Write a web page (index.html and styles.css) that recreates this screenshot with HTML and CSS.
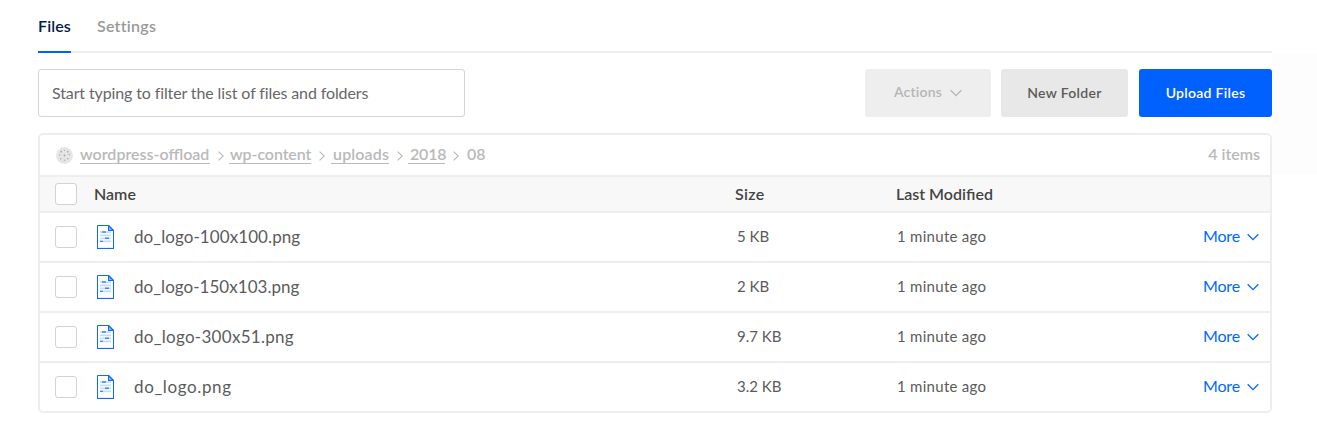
FILE: index.html
```
<!DOCTYPE html>
<html lang="en">
<head>
<meta charset="utf-8">
<title>Files</title>
<link rel="stylesheet" href="styles.css">
</head>
<body>
<svg class="defs" width="0" height="0" aria-hidden="true">
  <symbol id="down" viewBox="0 0 12 8"><path d="M.7 1.2 6 6.6l5.3-5.4" fill="none" stroke="currentColor" stroke-width="1.3"/></symbol>
  <symbol id="right" viewBox="0 0 6 10"><path d="M.6.6 5.2 5 .6 9.4" fill="none" stroke="currentColor" stroke-width="1.1"/></symbol>
  <symbol id="file" viewBox="0 0 17 24">
    <path d="M.5.5H11.5L16.5 5.5V23.5H.5Z" fill="#fff"/>
    <path d="M11.5.5H.5V23.4H16.5V5.5" fill="none" stroke="#0f69ff"/>
    <path d="M0 23h17v1H0z" fill="#0f69ff"/>
    <path d="M11 0h1l5 5v1h-6z" fill="#0f69ff"/>
    <path d="M12 2l3 3h-3z" fill="#8fbcff"/>
    <path d="M3 7.2h11M3 10.3h11M3 13.4h11M3 16.4h11" stroke="#c5dcff" stroke-width="1.7"/>
    <path d="M5 7h4M8 13.3h4M3 16.4h3" stroke="#3d86ff" stroke-width="1.4"/>
  </symbol>
</svg>
<main class="page">
  <nav class="tabs"><a class="tab active"><span>Files</span></a><a class="tab settings"><span>Settings</span></a></nav>
  <div class="toolbar">
    <input class="filter" type="text" placeholder="Start typing to filter the list of files and folders">
    <button class="btn actions"><span>Actions</span><svg class="down"><use href="#down"/></svg></button>
    <button class="btn folder"><span>New Folder</span></button>
    <button class="btn upload"><span>Upload Files</span></button>
  </div>
  <section class="panel">
    <div class="crumbs">
      <svg class="space" viewBox="0 0 18 18"><circle cx="9" cy="9" r="8.9" fill="#e5e5e5"/><g fill="#aaa"><circle cx="9" cy="9" r="1"/><circle cx="5.5" cy="5" r=".9"/><circle cx="9" cy="3.5" r=".7"/><circle cx="12.5" cy="5" r=".9"/><circle cx="14" cy="8" r=".8"/><circle cx="4" cy="8.5" r=".7"/><circle cx="5" cy="12.5" r=".8"/><circle cx="9" cy="14" r=".8"/><circle cx="12.5" cy="12.5" r=".8"/></g></svg>
      <a class="crumb c-bucket"><span>wordpress-offload</span></a><svg class="right r1"><use href="#right"/></svg>
      <a class="crumb c-content"><span>wp-content</span></a><svg class="right r2"><use href="#right"/></svg>
      <a class="crumb c-uploads"><span>uploads</span></a><svg class="right r3"><use href="#right"/></svg>
      <a class="crumb c-year"><span>2018</span></a><svg class="right r4"><use href="#right"/></svg>
      <span class="current">08</span>
      <span class="count">4 items</span>
    </div>
    <div class="row head"><i class="box"></i><b class="name">Name</b><b class="size">Size</b><b class="date">Last Modified</b></div>
    <div class="row"><i class="box"></i><svg class="file"><use href="#file"/></svg><span class="name n1">do_logo-100x100.png</span><span class="size">5 KB</span><span class="date">1 minute ago</span><a class="more"><span>More</span><svg class="down"><use href="#down"/></svg></a></div>
    <div class="row"><i class="box"></i><svg class="file"><use href="#file"/></svg><span class="name n2">do_logo-150x103.png</span><span class="size">2 KB</span><span class="date">1 minute ago</span><a class="more"><span>More</span><svg class="down"><use href="#down"/></svg></a></div>
    <div class="row"><i class="box"></i><svg class="file"><use href="#file"/></svg><span class="name n3">do_logo-300x51.png</span><span class="size">9.7 KB</span><span class="date">1 minute ago</span><a class="more"><span>More</span><svg class="down"><use href="#down"/></svg></a></div>
    <div class="row"><i class="box"></i><svg class="file"><use href="#file"/></svg><span class="name n4">do_logo.png</span><span class="size">3.2 KB</span><span class="date">1 minute ago</span><a class="more"><span>More</span><svg class="down"><use href="#down"/></svg></a></div>
  </section>
</main>
</body>
</html>
```
FILE: styles.css
```
* { box-sizing: border-box; }
body {
  margin: 0;
  font-family: Lato, "Liberation Sans", sans-serif;
  font-size: 16px;
  line-height: 20px;
  color: #5b5b5b;
  background: linear-gradient(#fdfdfd, #fdfdfd) 1272px 53px / 45px 122px no-repeat #fff;
}
.defs { display: none; }
svg { display: block; flex: none; }
.page { width: 1234px; margin-left: 38px; }
.tabs { display: flex; height: 53px; gap: 26px; border-bottom: 2px solid #eee; }
.tab { height: 53px; padding-top: 16px; font-weight: 600; font-size: 16px; color: #999; white-space: nowrap; }
.active { width: 33px; color: #031b4e; border-bottom: 2px solid #0061ff; }
.active span { letter-spacing: .12px; }
.settings { letter-spacing: .25px; }
.toolbar { display: flex; margin-top: 16px; height: 48px; }
.filter {
  width: 427px; margin-right: auto; padding: 0 13px 2px;
  border: 1px solid #d5d5d5; border-radius: 3px; outline: 0; background: #fff;
  font: 16px Lato, "Liberation Sans", sans-serif; letter-spacing: -.12px;
}
.filter::placeholder { color: #676767; opacity: 1; }
.btn {
  display: flex; align-items: center; justify-content: center; padding: 0;
  border: 0; border-radius: 3px; font: 600 14px Lato, "Liberation Sans", sans-serif; white-space: nowrap;
}
.btn span { padding-bottom: 2px; }
.actions { width: 126px; gap: 8px; background: #eee; color: #b5b5b5; margin-right: 10px; letter-spacing: .2px; }
.actions span { padding-bottom: 3px; }
.folder { width: 127px; background: #e8e8e8; color: #5b5b5b; margin-right: 11px; letter-spacing: .3px; }
.upload { width: 133px; background: #0061ff; color: #fff; letter-spacing: .3px; }
.down { width: 12px; height: 8px; }
.panel { margin-top: 16px; height: 280px; border: 2px solid #eee; border-radius: 5px; background: #fff; overflow: hidden; }
.crumbs { display: flex; align-items: center; height: 40px; padding: 0 10px 0 16px; font-weight: 600; color: #b9b9b9; }
.space { width: 17px; height: 17px; margin: 1px 7px 0 0; }
.crumb { height: 18px; line-height: 16px; border-bottom: 1px solid #bbb; white-space: nowrap; }
.c-bucket { width: 130px; }
.c-content { width: 82px; padding-left: 1px; letter-spacing: -.1px; }
.c-uploads { width: 58px; padding-left: 2px; letter-spacing: .15px; }
.c-year { width: 37px; padding-left: 2px; letter-spacing: -.2px; }
.right { width: 6px; height: 10px; margin: 2px 6px 0 8px; }
.r1 { margin-right: 5px; }
.r3 { margin-right: 5px; }
.current { margin-left: 2px; padding-bottom: 2px; }
.count { margin-left: auto; padding-bottom: 2px; }
.row { display: flex; align-items: center; height: 50px; border-top: 2px solid #eee; padding: 0 11px 0 15px; }
.box { flex: none; width: 22px; height: 22px; border: 1px solid #d3d3d3; border-radius: 3px; background: #fff; }
.file { width: 17px; height: 24px; margin-left: 20px; }
.name { width: 603px; margin-left: 20px; font-size: 17px; white-space: nowrap; }
.n1 { letter-spacing: .08px; }
.n2 { letter-spacing: .04px; }
.n3 { letter-spacing: .28px; }
.n4 { letter-spacing: .62px; }
.size { width: 160px; font-size: 15px; padding-bottom: 2px; }
.date { font-size: 15px; white-space: nowrap; letter-spacing: .28px; padding-bottom: 2px; }
.head { height: 36px; background: #f8f8f8; color: #444; }
.head b { font-weight: 600; font-size: 16px; letter-spacing: 0; padding-bottom: 0; }
.head .name { width: 641px; margin-left: 17px; }
.head .size { width: 161px; letter-spacing: .3px; }
.more { display: flex; align-items: center; gap: 7px; margin-left: auto; color: #0069ff; letter-spacing: -.15px; }
.more span { padding-bottom: 2px; }
```
